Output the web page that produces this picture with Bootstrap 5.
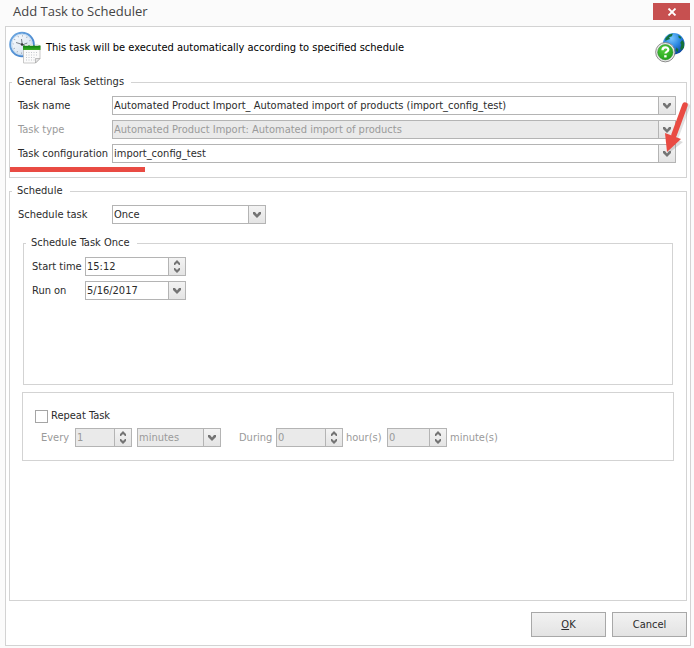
<!DOCTYPE html>
<html lang="en">
<head>
<meta charset="utf-8">
<meta name="viewport" content="width=device-width, initial-scale=1">
<title>Add Task to Scheduler</title>
<link href="https://cdn.jsdelivr.net/npm/bootstrap@5.3.0/dist/css/bootstrap.min.css" rel="stylesheet">
<style>
  :root { --line: #d3d3d3; --edge: #b4b4b4; --ink: #2b2b2b; --dim: #9a9a9a; }
  body { background: #fbfbfb; color: var(--ink); font: 11px/16px "DejaVu Sans Condensed", "Noto Sans", sans-serif; }
  label { white-space: nowrap; }
  .titlebar { height: 26px; padding: 0 4px 0 13px; }
  .titlebar h1 { font: 13px/22px "Open Sans", sans-serif; color: #444; }
  .close-btn { width: 37px; height: 17px; margin-top: 3px; background: #c75050; color: #fff; border: 0; border-radius: 0; }
  .window-body { margin: 0 3px 2px 5px; padding: 0 3px 8px; border: 1px solid var(--line); background: #fff; }
  .banner { height: 47px; padding: 0 2px 6px 0; color: #000; }
  .banner p { margin-left: 5px; }
  .group { border: 1px solid var(--line); padding: 6px 10px 14px 8px; }
  .group > legend { float: none; width: auto; margin: 0 0 0 -6px; padding: 0 7px 0 5px; font-size: 11px; line-height: 16px; }
  .stack { display: grid; gap: 5px; }
  .label-wide { width: 94px; flex: none; }
  .label-short { width: 53px; flex: none; }
  .field { display: flex; height: 19px; border: 1px solid var(--edge); background: #fff; }
  .field > input, .field > select { flex: 1; min-width: 0; width: 0; border: 0; padding: 0 1px; margin: 0; background: transparent; color: inherit; appearance: none; font: inherit; line-height: 16px; outline-offset: -1px; opacity: 1; }
  .drop, .spin { width: 17px; flex: none; border-left: 1px solid var(--edge); background: linear-gradient(#f3f3f3, #e4e4e4); pointer-events: none; }
  .spin { pointer-events: auto; }
  .spin button { height: 8px; border: 0; padding: 0; background: none; line-height: 0; }
  .off { color: var(--dim); }
  .off .field { background: #eaeaea; }
  .w-once { width: 154px; } .w-time { width: 101px; } .w-every { width: 57px; }
  .w-unit { width: 84px; } .w-hour { width: 67px; } .w-min { width: 60px; }
  .schedule { margin-top: 5px; padding: 6px 12px 14px 8px; }
  .once { margin: 11px 1px 0 5px; min-height: 150px; }
  .repeat { border: 1px solid var(--line); margin: 7px 0 0 4px; padding: 15px 12px 13px; }
  .repeat .form-check-input { width: 13px; height: 13px; margin: 0 3px 0 0; border: 1px solid #a5a5a5; border-radius: 0; }
  .repeat-row { margin-top: 4px; padding-left: 6px; }
  .label-every { width: 34px; } .label-during { width: 37px; margin-left: 18px; }
  .label-hour { width: 41px; margin-left: 3px; } .label-min { margin-left: 3px; }
  .unit-gap { margin-left: 5px; }
  .dialog-actions { gap: 6px; padding-top: 11px; }
  .dialog-btn { width: 75px; height: 25px; padding: 0; border: 1px solid #a8a8a8; border-radius: 0; font-size: 11px; line-height: 16px; color: var(--ink); background: linear-gradient(#f2f2f2, #e3e3e3); }
  .underline-mark { position: absolute; left: 0; bottom: 5px; width: 135px; height: 5px; background: #e94b43; }
  .arrow-mark { position: absolute; right: -6px; top: 11px; pointer-events: none; }
</style>
</head>
<body>
<svg width="0" height="0" class="position-absolute" aria-hidden="true">
  <symbol id="down" viewBox="0 0 8 6"><path d="M0 0h2l2 2.500L6 0h2v2L4 6 0 2z" fill="#747474"/></symbol>
  <symbol id="up-s" viewBox="0 0 6 5"><path d="M0 5V3l3-3 3 3v2H5L3 3 1 5z" fill="#747474"/></symbol>
  <symbol id="down-s" viewBox="0 0 6 5"><path d="M0 0v2l3 3 3-3V0H5L3 2 1 0z" fill="#747474"/></symbol>
</svg>
<div class="d-flex flex-column min-vh-100">
  <header class="titlebar d-flex justify-content-between align-items-start">
    <h1 class="m-0">Add Task to Scheduler</h1>
    <button type="button" class="btn close-btn p-0 d-flex align-items-center justify-content-center" aria-label="Close">
      <svg width="10" height="8" viewBox="0 0 10 8"><path d="M1.500 .5l7 7M8.500 .5l-7 7" stroke="#fff" stroke-width="1.800"/></svg>
    </button>
  </header>

  <form class="window-body flex-grow-1 d-flex flex-column">
    <div class="banner d-flex align-items-center">
      <svg width="32" height="33" viewBox="0 0 32 33" aria-hidden="true" class="flex-shrink-0">
        <defs>
          <linearGradient id="rim" x1="0" y1="0" x2="1" y2="1"><stop stop-color="#6fa9e2"/><stop offset="1" stop-color="#3b7cc8"/></linearGradient>
          <linearGradient id="face" x1="0" y1="0" x2="1" y2="1"><stop stop-color="#fff"/><stop offset="1" stop-color="#cbdaeb"/></linearGradient>
          <linearGradient id="strip" x1="0" y1="0" x2="0" y2="1"><stop stop-color="#0c7d0c"/><stop offset="1" stop-color="#3cae28"/></linearGradient>
        </defs>
        <circle cx="13" cy="13.500" r="11.800" fill="url(#face)" stroke="url(#rim)" stroke-width="2"/>
        <circle cx="13" cy="13.500" r="10.300" fill="none" stroke="#b9d5ef" stroke-width=".8"/>
        <circle cx="13" cy="13.500" r="8.700" fill="none" stroke="#8e99a8" stroke-width="1.200" stroke-dasharray=".8 3.750"/>
        <path d="M7 11.500l8 2.500M12.500 8l.8 6 5-2" fill="none" stroke="#59636f" stroke-width=".8"/><circle cx="13" cy="13.500" r="1.200" fill="#333"/>
        <path d="M14.500 15h16.500v12.500l-4.500 4.500h-12z" fill="#fbfbfb" stroke="#bdbdbd" stroke-width=".8"/>
        <path d="M26.500 32v-4.500h4.500z" fill="#e6e6e6" stroke="#9a9a9a" stroke-width=".6"/>
        <path d="M14 14.500h17.500v4.500H14z" fill="url(#strip)"/>
        <path d="M16 14h3M21 14h3M26 14h3.500" stroke="#dfe6df" stroke-width="1.600"/>
        <path d="M17 21.500h12M17 24h12M17 26.500h9.500M17 29h9" stroke="#c3c7cc" stroke-width="1" stroke-dasharray="1 1.500"/>
      </svg>
      <p class="mb-0 flex-grow-1">This task will be executed automatically according to specified schedule</p>
      <a href="#help" aria-label="Help" class="lh-1">
        <svg width="30" height="31" viewBox="0 0 32 32" aria-hidden="true">
          <defs>
            <radialGradient id="sea" cx=".4" cy=".25" r=".8"><stop stop-color="#78c6ff"/><stop offset=".5" stop-color="#2b86e0"/><stop offset="1" stop-color="#063d96"/></radialGradient>
            <radialGradient id="go" cx=".4" cy=".3" r=".8"><stop stop-color="#55cf3e"/><stop offset="1" stop-color="#1c9d18"/></radialGradient>
          </defs>
          <circle cx="20" cy="12" r="11.500" fill="url(#sea)"/>
          <path d="M11 6l4-4 4-1-1 3-3 1 1 2-3 1-2 1zM25 3l3 2-1 2-2-2zM29 8l2 3v5l-3 3-1-2 1-4-1-2zM23 16l2 2-1 3-2-2z" fill="#14713a"/>
          <circle cx="11" cy="21" r="10.300" fill="#ececec" stroke="#858585"/>
          <circle cx="11" cy="21" r="8.200" fill="url(#go)" stroke="#38853a" stroke-width=".6"/>
          <path d="M8 18.800c0-3.800 6.200-3.800 6.200-.5 0 2.100-3.100 2-3.100 4.200" fill="none" stroke="#fff" stroke-width="2.400"/><path d="M9.800 24.200h2.600v2.400H9.800z" fill="#fff"/>
        </svg>
      </a>
    </div>

    <fieldset class="group position-relative">
      <legend>General Task Settings</legend>
      <div class="stack">
        <div class="d-flex align-items-center">
          <label for="taskName" class="label-wide">Task name</label>
          <div class="field flex-grow-1"><input id="taskName" type="text" value="Automated Product Import_ Automated import of products (import_config_test)"><span class="drop d-flex align-items-center justify-content-center"><svg width="8" height="6"><use href="#down"/></svg></span></div>
        </div>
        <div class="d-flex align-items-center off">
          <label for="taskType" class="label-wide">Task type</label>
          <div class="field flex-grow-1"><select id="taskType" disabled><option>Automated Product Import: Automated import of products</option></select><span class="drop d-flex align-items-center justify-content-center"><svg width="8" height="6"><use href="#down"/></svg></span></div>
        </div>
        <div class="d-flex align-items-center">
          <label for="taskConfig" class="label-wide">Task configuration</label>
          <div class="field flex-grow-1"><select id="taskConfig"><option>import_config_test</option></select><span class="drop d-flex align-items-center justify-content-center"><svg width="8" height="6"><use href="#down"/></svg></span></div>
        </div>
      </div>
      <div class="underline-mark"></div>
      <svg class="arrow-mark" width="32" height="56" viewBox="0 0 32 56" aria-hidden="true">
        <path d="M25.500 3.500L14 34" stroke="#888" stroke-opacity=".25" stroke-width="7" stroke-linecap="round" transform="translate(1 2)"/>
        <path d="M5.500 33l16.500 6L8 50z" fill="#888" fill-opacity=".3" transform="translate(1 2)"/>
        <path d="M25 4L14 34" stroke="#e94b43" stroke-width="5.500" stroke-linecap="round"/>
        <path d="M5 32l16 6L7 51z" fill="#e94b43"/>
      </svg>
    </fieldset>

    <fieldset class="group schedule flex-grow-1">
      <legend>Schedule</legend>
      <div class="d-flex align-items-center">
        <label for="freq" class="label-wide">Schedule task</label>
        <div class="field w-once"><select id="freq"><option>Once</option></select><span class="drop d-flex align-items-center justify-content-center"><svg width="8" height="6"><use href="#down"/></svg></span></div>
      </div>

      <fieldset class="group once">
        <legend>Schedule Task Once</legend>
        <div class="stack">
          <div class="d-flex align-items-center">
            <label for="start" class="label-short">Start time</label>
            <div class="field w-time"><input id="start" type="text" value="15:12"><span class="spin d-flex flex-column justify-content-center"><button type="button" aria-label="Later"><svg width="6" height="5"><use href="#up-s"/></svg></button><button type="button" aria-label="Earlier"><svg width="6" height="5"><use href="#down-s"/></svg></button></span></div>
          </div>
          <div class="d-flex align-items-center">
            <label for="runOn" class="label-short">Run on</label>
            <div class="field w-time"><input id="runOn" type="text" value="5/16/2017"><span class="drop d-flex align-items-center justify-content-center"><svg width="8" height="6"><use href="#down"/></svg></span></div>
          </div>
        </div>
      </fieldset>

      <div class="repeat">
        <div class="d-flex align-items-center">
          <input class="form-check-input" type="checkbox" id="repeatTask"><label for="repeatTask">Repeat Task</label>
        </div>
        <div class="repeat-row d-flex align-items-center off">
          <label for="every" class="label-every">Every</label>
          <div class="field w-every"><input id="every" type="text" value="1" disabled><span class="spin d-flex flex-column justify-content-center"><button type="button" disabled aria-label="More"><svg width="6" height="5"><use href="#up-s"/></svg></button><button type="button" disabled aria-label="Less"><svg width="6" height="5"><use href="#down-s"/></svg></button></span></div>
          <div class="field w-unit unit-gap"><select id="unit" disabled aria-label="Unit"><option>minutes</option></select><span class="drop d-flex align-items-center justify-content-center"><svg width="8" height="6"><use href="#down"/></svg></span></div>
          <label for="hours" class="label-during">During</label>
          <div class="field w-hour"><input id="hours" type="text" value="0" disabled><span class="spin d-flex flex-column justify-content-center"><button type="button" disabled aria-label="More hours"><svg width="6" height="5"><use href="#up-s"/></svg></button><button type="button" disabled aria-label="Fewer hours"><svg width="6" height="5"><use href="#down-s"/></svg></button></span></div>
          <label for="hours" class="label-hour">hour(s)</label>
          <div class="field w-min"><input id="mins" type="text" value="0" disabled><span class="spin d-flex flex-column justify-content-center"><button type="button" disabled aria-label="More minutes"><svg width="6" height="5"><use href="#up-s"/></svg></button><button type="button" disabled aria-label="Fewer minutes"><svg width="6" height="5"><use href="#down-s"/></svg></button></span></div>
          <label for="mins" class="label-min">minute(s)</label>
        </div>
      </div>
    </fieldset>

    <div class="d-flex justify-content-end dialog-actions">
      <button type="submit" class="btn dialog-btn"><u>O</u>K</button>
      <button type="button" class="btn dialog-btn">Cancel</button>
    </div>
  </form>
</div>
<script src="https://cdn.jsdelivr.net/npm/bootstrap@5.3.0/dist/js/bootstrap.bundle.min.js"></script>
</body>
</html>
